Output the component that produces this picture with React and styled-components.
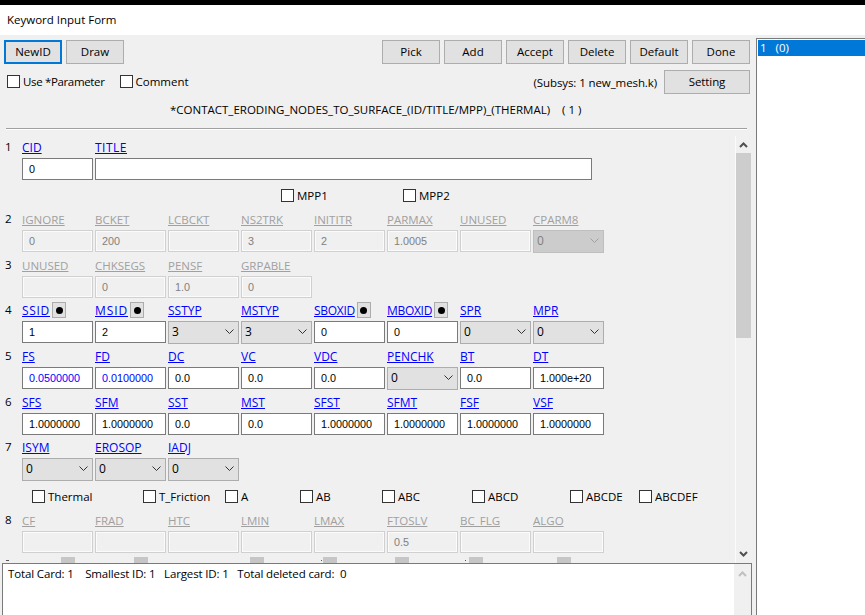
import React from "react";
import styled, { createGlobalStyle } from "styled-components";

const Global = createGlobalStyle`
  html, body { margin: 0; padding: 0; background: #f0f0f0; }
  * { box-sizing: border-box; }
`;
const UI = `"Open Sans", "Noto Sans", sans-serif`;
const FIELD = `"Liberation Sans", Arial, sans-serif`;

const Page = styled.div`
  width: 865px; height: 615px; overflow: hidden; display: flex; flex-direction: column;
  font-family: ${UI}; font-size: 12px; color: #000; background: #f0f0f0;
`;
const TopEdge = styled.div`height: 5px; background: #000; flex: none;`;
const TitleBar = styled.div`
  height: 30px; flex: none; background: #fff; padding: 0 7px 2px; display: flex; align-items: center;
  font-size: 11.5px;
`;
const Body = styled.div`flex: 1; min-height: 0; display: flex; padding-top: 3px;`;
const Main = styled.div`width: 756px; flex: none; display: flex; flex-direction: column; min-height: 0;`;
const CardList = styled.div`flex: 1; border-left: 1px solid #7a7a7a; border-top: 1px solid #7a7a7a; background: #fff; padding: 1px 0 0 1px;`;
const CardItem = styled.div`height: 16px; background: #0078d7; color: #fff; font-size: 11.5px; line-height: 16px; padding-left: 2px; white-space: pre;`;
const Toolbar = styled.div`display: flex; justify-content: space-between; padding: 2px 6px 0 4px;`;
const BtnGroup = styled.div`display: flex; gap: 4px;`;
const Button = styled.div`
  width: ${p => p.$w || 58}px; height: 24px; background: #e1e1e1; padding-bottom: 2px;
  border: ${p => p.$focus ? "2px solid #0078d7" : "1px solid #adadad"};
  display: flex; align-items: center; justify-content: center; font-size: 11.5px;
`;
const OptionRow = styled.div`display: flex; align-items: center; justify-content: space-between; padding: 6px 6px 0 7px; height: 30px;`;
const OptionLeft = styled.div`display: flex; gap: 15px; padding-bottom: 2px;`;
const OptionRight = styled.div`display: flex; align-items: center; gap: 7px; font-size: 11.5px; letter-spacing: -0.1px;`;
const Check = styled.label`
  display: inline-flex; align-items: center; gap: 3px; font-size: 11.5px; line-height: 13px; white-space: nowrap;
  letter-spacing: ${p => p.$ls || 0}px;
`;
const Box = styled.span`width: 13px; height: 13px; flex: none; background: #fff; border: 1px solid #333;`;
const KeywordTitle = styled.div`height: 34px; display: flex; align-items: center; padding: 0 0 3px 170px; font-size: 11.5px; white-space: pre; flex: none;`;
const Divider = styled.div`height: 2px; margin: 0 9px 0 6px; background: #a0a0a0; border-bottom: 1px solid #fff; flex: none;`;
const Scroller = styled.div`height: 433px; flex: none; display: flex; padding: 6px 5px 0 0; overflow: hidden;`;
const Form = styled.div`width: 735px; flex: none; height: 427px; overflow: hidden; padding-top: 4px;`;
const Card = styled.div`
  height: ${p => p.$h || 46}px; display: grid; grid-template-columns: 17px repeat(8, 71px); column-gap: 2px; padding-left: 3px;
`;
const CardNo = styled.div`font-size: 11.5px; line-height: 13px; padding-left: 2px;`;
const Field = styled.div`display: flex; flex-direction: column; grid-column: ${p => p.$span ? `span ${p.$span}` : "auto"};`;
const LabelLine = styled.div`height: 18px; display: flex; gap: 2px;`;
const FieldLabel = styled.span`
  font-size: ${p => p.$off ? 11.5 : 12}px; line-height: 16px; height: 16px; text-decoration: underline;
  letter-spacing: ${p => p.$ls || 0}px;
  color: ${p => p.$off ? "#a0a0a0" : "#0000ff"}; white-space: nowrap;
`;
const DotBtn = styled.span`
  width: 14px; height: 16px; margin-top: -1px; background: #e1e1e1; border: 1px solid #adadad; display: flex; align-items: center; justify-content: center; flex: none;
  &::after { content: ""; width: 7px; height: 7px; border-radius: 50%; background: #000; }
`;
const StubBtn = styled.span`width: 14px; height: 6px; margin-top: -1px; background: #c6c6c6; flex: none;`;
const Input = styled.div`
  height: 21.5px; width: 100%; padding-left: 6px; display: flex; align-items: center;
  font-family: ${FIELD}; font-size: 10.8px;
  background: ${p => p.$off ? "#f0f0f0" : "#fff"};
  border: 1px solid ${p => p.$off ? "#d0d0d0" : "#7a7a7a"};
  box-shadow: ${p => p.$off ? "inset 0 0 0 1px #fbfbfb" : "none"};
  color: ${p => p.$off ? "#808080" : p.$blue ? "#0000ff" : "#000"};
`;
const TitleInput = styled(Input)`width: 497px;`;
const Select = styled.div`
  height: 22.5px; width: 100%; padding: 0 4px 1px 3px; display: flex; align-items: center; justify-content: space-between;
  font-family: ${UI}; font-size: 12px;
  background: ${p => p.$off ? "#cccccc" : "#e1e1e1"};
  border: 1px solid ${p => p.$off ? "#bfbfbf" : "#adadad"};
  color: ${p => p.$off ? "#808080" : "#000"};
`;
const Chevron = ({ off }) => (
  <svg width="9" height="5" viewBox="0 0 9 5" fill="none" stroke={off ? "#a0a0a0" : "#333"} strokeWidth="1"><path d="M.5.5l4 4 4-4" /></svg>
);
const Sel = ({ v, off }) => <Select $off={off}>{v}<Chevron off={off} /></Select>;

const ChecksRow = styled.div`display: flex; height: ${p => p.$h}px; padding-top: ${p => p.$top}px;`;
const Slot = styled.div`width: ${p => p.$w}px; flex: none;`;
const VBar = styled.div`
  width: 16px; flex: none; background: #f0f0f0; border-left: 1px solid #fbfbfb; display: flex; flex-direction: column; align-items: center; padding-bottom: 1px;
`;
const Arrow = styled.div`height: 17px; flex: none; display: flex; align-items: center; justify-content: center;`;
const Thumb = styled.div`height: 185px; width: 15px; flex: none; background: #cdcdcd;`;
const Spacer = styled.div`flex: 1;`;
const ArrowIcon = ({ up, color = "#505050" }) => (
  <svg width="9" height="6" viewBox="0 0 9 6" fill="none" stroke={color} strokeWidth="2">{up ? <path d="M1 5l3.5-3.5L8 5" /> : <path d="M1 1l3.5 3.5L8 1" />}</svg>
);
const LogBox = styled.div`
  flex: 1; margin: 0 4px 0 2px; border: 1px solid #7a7a7a; border-bottom: none; background: #fff; display: flex; min-height: 0;
`;
const LogText = styled.div`flex: 1; padding: 2px 5px; font-size: 11.5px; white-space: pre; letter-spacing: -0.14px;`;
const LogBar = styled.div`width: 17px; flex: none; background: #f0f0f0; display: flex; flex-direction: column; padding-top: 1px;`;
const StubCell = styled.div`display: flex; align-items: flex-start; padding-left: ${p => p.$at || 0}px;`;
const Tick = styled.span`
  width: ${p => p.$w || 1}px; height: 1px; margin: 2px ${p => p.$gap || 0}px 0 0; background: #555; flex: none;
`;

const card2 = ["IGNORE:0","BCKET:200","LCBCKT:","NS2TRK:3","INITITR:2","PARMAX:1.0005","UNUSED:"];
const card3 = ["UNUSED:","CHKSEGS:0","PENSF:1.0","GRPABLE:0"];
const card8 = ["CF:","FRAD:","HTC:","LMIN:","LMAX:","FTOSLV:0.5","BC_FLG:","ALGO:"];
const card5 = [["FS","0.0500000",1],["FD","0.0100000",1],["DC","0.0"],["VC","0.0"],["VDC","0.0"]];
const card6 = [["SFS","1.0000000"],["SFM","1.0000000"],["SST","0.0"],["MST","0.0"],["SFST","1.0000000"],["SFMT","1.0000000"],["FSF","1.0000000"],["VSF","1.0000000"]];

const OffFields = ({ items }) => items.map(s => {
  const [l, v] = s.split(":");
  return <Field key={l}><LabelLine><FieldLabel $off>{l}</FieldLabel></LabelLine><Input $off>{v}</Input></Field>;
});
const F = ({ l, v, dot, blue, ls }) => (
  <Field><LabelLine><FieldLabel $ls={ls}>{l}</FieldLabel>{dot && <DotBtn />}</LabelLine><Input $blue={blue}>{v}</Input></Field>
);
const S = ({ l, v }) => (
  <Field><LabelLine><FieldLabel>{l}</FieldLabel></LabelLine><Sel v={v} /></Field>
);
const Labeled = ({ w, text, pre = 0 }) => (
  <><Slot $w={pre} /><Slot $w={w}><Check><Box />{text}</Check></Slot></>
);

export default function App() {
  return (
    <Page>
      <Global />
      <TopEdge />
      <TitleBar>Keyword Input Form</TitleBar>
      <Body>
        <Main>
          <Toolbar>
            <BtnGroup><Button $focus>NewID</Button><Button>Draw</Button></BtnGroup>
            <BtnGroup>{["Pick","Add","Accept","Delete","Default","Done"].map(b => <Button key={b}>{b}</Button>)}</BtnGroup>
          </Toolbar>
          <OptionRow>
            <OptionLeft><Check $ls={-0.35}><Box />Use *Parameter</Check><Check><Box />Comment</Check></OptionLeft>
            <OptionRight>(Subsys: 1 new_mesh.k)<Button $w={86}>Setting</Button></OptionRight>
          </OptionRow>
          <KeywordTitle>{"*CONTACT_ERODING_NODES_TO_SURFACE_(ID/TITLE/MPP)_(THERMAL)    ( 1 )"}</KeywordTitle>
          <Divider />
          <Scroller>
            <Form>
              <Card $h={41}>
                <CardNo>1</CardNo>
                <F l="CID" v="0" />
                <Field $span={7}><LabelLine><FieldLabel $ls={0.5}>TITLE</FieldLabel></LabelLine><TitleInput /></Field>
              </Card>
              <ChecksRow $h={31} $top={8}>
                <Labeled pre={281} w={122} text="MPP1" />
                <Labeled w={100} text="MPP2" />
              </ChecksRow>
              <Card>
                <CardNo>2</CardNo>
                <OffFields items={card2} />
                <Field><LabelLine><FieldLabel $off>CPARM8</FieldLabel></LabelLine><Sel v="0" off /></Field>
              </Card>
              <Card $h={45}>
                <CardNo>3</CardNo>
                <OffFields items={card3} />
              </Card>
              <Card>
                <CardNo>4</CardNo>
                <F l="SSID" v="1" dot ls={0.7} /><F l="MSID" v="2" dot ls={0.9} />
                <S l="SSTYP" v="3" /><S l="MSTYP" v="3" />
                <F l="SBOXID" v="0" dot ls={-0.3} /><F l="MBOXID" v="0" dot ls={-0.3} />
                <S l="SPR" v="0" /><S l="MPR" v="0" />
              </Card>
              <Card>
                <CardNo>5</CardNo>
                {card5.map(([l, v, b]) => <F key={l} l={l} v={v} blue={b} />)}
                <S l="PENCHK" v="0" /><F l="BT" v="0.0" /><F l="DT" v="1.000e+20" />
              </Card>
              <Card $h={45}>
                <CardNo>6</CardNo>
                {card6.map(([l, v]) => <F key={l} l={l} v={v} />)}
              </Card>
              <Card $h={50}>
                <CardNo>7</CardNo>
                <S l="ISYM" v="0" /><S l="EROSOP" v="0" /><S l="IADJ" v="0" />
              </Card>
              <ChecksRow $h={23} $top={0}>
                <Labeled pre={32} w={111} text="Thermal" />
                <Labeled w={82} text="T_Friction" />
                <Labeled w={75} text="A" />
                <Labeled w={82} text="AB" />
                <Labeled w={90} text="ABC" />
                <Labeled w={98} text="ABCD" />
                <Labeled w={69} text="ABCDE" />
                <Labeled w={70} text="ABCDEF" />
              </ChecksRow>
              <Card $h={45}>
                <CardNo>8</CardNo>
                <OffFields items={card8} />
              </Card>
              <Card>
                <StubCell $at={3}><Tick $w={3} /></StubCell>
                <StubCell $at={39}><StubBtn /></StubCell>
                <StubCell $at={39}><StubBtn /></StubCell>
                <StubCell />
                <StubCell $at={9}><StubBtn /></StubCell>
                <StubCell $at={7}><Tick $gap={1} /><StubBtn /></StubCell>
                <StubCell $at={8}><StubBtn /></StubCell>
                <StubCell $at={5}><Tick $gap={3} /><StubBtn /></StubCell>
                <StubCell $at={24}><StubBtn /></StubCell>
              </Card>
            </Form>
            <VBar>
              <Arrow><ArrowIcon up /></Arrow>
              <Thumb />
              <Spacer />
              <Arrow><ArrowIcon /></Arrow>
            </VBar>
          </Scroller>
          <LogBox>
            <LogText>{"Total Card: 1    Smallest ID: 1   Largest ID: 1   Total deleted card:  0"}</LogText>
            <LogBar><Arrow><ArrowIcon up color="#c0c0c0" /></Arrow></LogBar>
          </LogBox>
        </Main>
        <CardList><CardItem>{"1   (0)"}</CardItem></CardList>
      </Body>
    </Page>
  );
}
